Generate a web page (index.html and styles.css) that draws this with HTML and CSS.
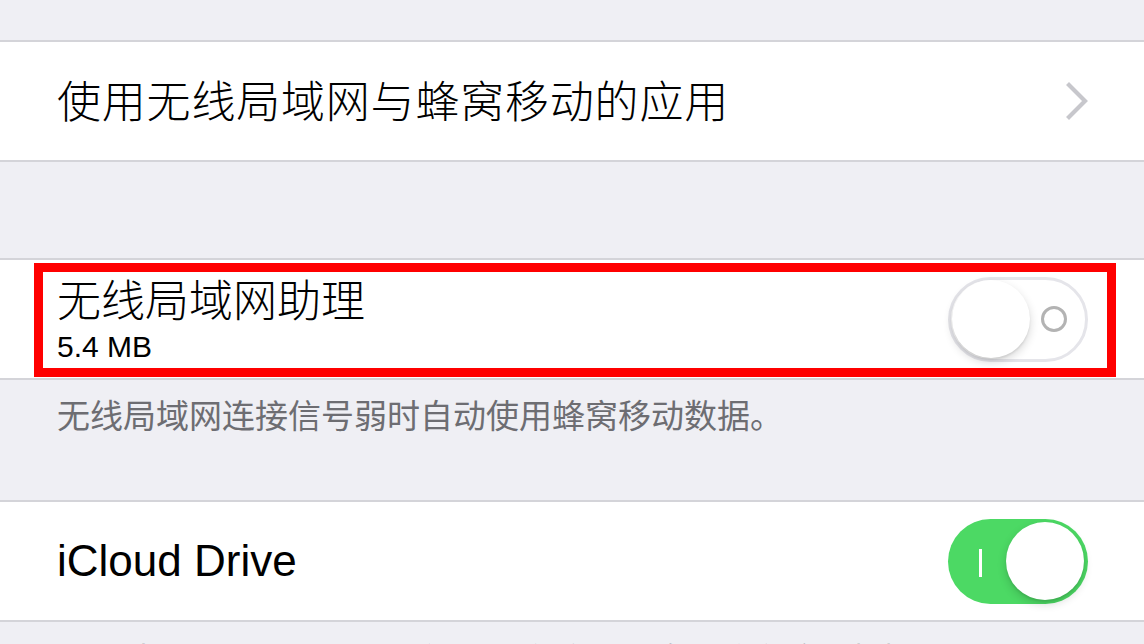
FILE: index.html
```html
<!DOCTYPE html>
<html lang="zh-CN">
<head>
<meta charset="utf-8">
<title>设置</title>
<link rel="stylesheet" href="styles.css">
</head>
<body>
<div class="page">
  <div class="gap gap-top"></div>
  <div class="group">
    <div class="row row-single">
      <span class="title title-wide">使用无线局域网与蜂窝移动的应用</span>
      <svg class="chevron" width="24" height="38" viewBox="0 0 24 38">
        <polyline points="3,3 19,19 3,35" fill="none" stroke="#c7c7cc" stroke-width="4.2" stroke-linecap="square"/>
      </svg>
    </div>
  </div>
  <div class="gap gap-mid"></div>
  <div class="group">
    <div class="row row-double">
      <div class="texts">
        <span class="title">无线局域网助理</span>
        <span class="sub">5.4 MB</span>
      </div>
      <div class="switch switch-off">
        <div class="knob"></div>
        <div class="ring"></div>
      </div>
      <div class="highlight"></div>
    </div>
  </div>
  <div class="footer">无线局域网连接信号弱时自动使用蜂窝移动数据。</div>
  <div class="group">
    <div class="row row-single">
      <span class="title">iCloud Drive</span>
      <div class="switch switch-on">
        <div class="bar"></div>
        <div class="knob"></div>
      </div>
    </div>
  </div>
  <div class="footer footer-last">当无线局域网不可用时，使用蜂窝移动网络传输文稿和数据。</div>
</div>
</body>
</html>
```
FILE: styles.css
```css
* { box-sizing: border-box; }
html, body {
  margin: 0;
  padding: 0;
  background: #efeff4;
  overflow: hidden;
}
.page {
  width: 1144px;
  height: 644px;
  overflow: hidden;
  font-family: "Liberation Sans", "Noto Sans CJK SC", sans-serif;
  color: #000;
}
.gap-top { height: 40px; }
.gap-mid { height: 96px; }
.group {
  background: #fff;
  border-top: 2px solid #d4d4d9;
  border-bottom: 2px solid #d4d4d9;
}
.row {
  position: relative;
  display: flex;
  align-items: center;
  justify-content: space-between;
  padding: 0 56px 0 57px;
  height: 118px;
}
.title {
  font-size: 44px;
  line-height: 50px;
  white-space: nowrap;
  font-weight: 300;
}
.title-wide {
  letter-spacing: 0.8px;
  margin-top: 4px;
}
.texts {
  display: flex;
  flex-direction: column;
  padding-top: 3px;
}
.sub {
  font-size: 30px;
  line-height: 34px;
  margin-top: 3px;
}
.chevron { display: block; margin-right: -2px; }
.switch {
  width: 140px;
  height: 85px;
  border-radius: 43px;
  display: flex;
  align-items: center;
  flex: none;
}
.switch-off {
  border: 3px solid #e5e5ea;
  background: #fff;
  padding: 0 18px 0 1px;
  justify-content: space-between;
}
.switch-on {
  background: #4cd964;
  padding: 0 4px 0 31px;
  justify-content: space-between;
}
.knob {
  width: 78px;
  height: 78px;
  border-radius: 50%;
  background: #fff;
  box-shadow: 0 4px 10px rgba(0, 0, 0, 0.16), 0 2px 2px rgba(0, 0, 0, 0.08);
}
.ring {
  width: 26px;
  height: 26px;
  border-radius: 50%;
  border: 3px solid #b3b3b3;
}
.bar {
  width: 3px;
  height: 28px;
  background: #fff;
  margin-top: 3px;
}
.highlight {
  position: absolute;
  left: 34px;
  top: 3px;
  width: 1082px;
  height: 114px;
  border: 9px solid #ff0000;
  pointer-events: none;
}
.footer {
  height: 120px;
  padding: 17px 57px 0;
  font-size: 33px;
  line-height: 40px;
  color: #6d6d72;
  white-space: nowrap;
}
.footer-last { padding-top: 19px; }
```
